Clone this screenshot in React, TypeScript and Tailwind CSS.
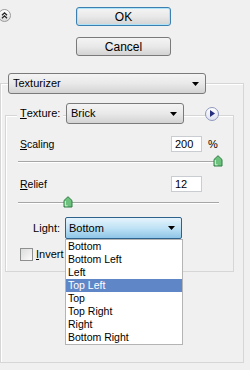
import React from "react";

function Arrow({ className = "" }: { className?: string }) {
  return (
    <svg width="7" height="4" viewBox="0 0 7 4" className={className}>
      <path d="M0 0H7L3.5 4Z" fill="#000" />
    </svg>
  );
}

function Thumb() {
  return (
    <svg width="10" height="12" viewBox="0 0 10 12">
      <path d="M1 4.5L5 0.7L9 4.5V11H1Z" fill="#6cc27d" stroke="#2f7d43" strokeWidth="1" />
      <path d="M2.3 5V9.8H4.5" fill="none" stroke="#d8f3dc" strokeWidth="1" />
    </svg>
  );
}

export default function App() {
  const items = [
    "Bottom",
    "Bottom Left",
    "Left",
    "Top Left",
    "Top",
    "Top Right",
    "Right",
    "Bottom Right",
  ];
  return (
    <div className="relative w-[250px] h-[370px] overflow-hidden bg-[#f0f0f0] text-[11px] leading-none text-black font-['Liberation_Sans',Arial,sans-serif]">
      <div className="flex flex-col">
        {/* top buttons */}
        <div className="flex items-start pt-[7px]">
          <div className="-ml-[2px] mt-[2px] flex h-[13px] w-[13px] items-center justify-center rounded-full border border-[#9a9a9a] bg-linear-to-b from-[#ffffff] to-[#d9d9d9]">
            <svg width="7" height="7" viewBox="0 0 7 7">
              <path d="M1 3.3L3.5 0.9L6 3.3M1 6.3L3.5 3.9L6 6.3" fill="none" stroke="#222" strokeWidth="1.3" />
            </svg>
          </div>
          <div className="ml-[65px] flex flex-col gap-[11px]">
            <div className="flex h-[19px] w-[95px] items-center justify-center rounded-[3px] border border-[#3c7fb1] bg-linear-to-b from-[#f4f4f4] via-[#e9e9e9] to-[#d3d3d3] shadow-[inset_0_0_0_1px_#aee3f8] text-[12px]">
              OK
            </div>
            <div className="flex h-[19px] w-[95px] items-center justify-center rounded-[3px] border border-[#7a7a7a] bg-linear-to-b from-[#f4f4f4] via-[#e9e9e9] to-[#d3d3d3] text-[12px]">
              Cancel
            </div>
          </div>
        </div>

        {/* Texturizer select */}
        <div className="relative z-10 ml-[8px] mt-[17px] flex h-[21px] w-[198px] items-center justify-between rounded-[3px] border border-[#7a7a7a] bg-linear-to-b from-[#f4f4f4] via-[#e9e9e9] to-[#d3d3d3] pl-[4px] pr-[6px]">
          <span>Texturizer</span>
          <Arrow />
        </div>

        {/* outer box */}
        <div className="-mt-[11px] flex h-[280px] w-[244px] flex-col border border-[#d6d6d6] pt-[19px] shadow-[inset_1px_1px_0_#ffffff]">
          {/* Texture legend row */}
          <div className="relative z-10 ml-[16px] flex h-[21px] items-center">
            <span className="flex h-full w-[46px] items-center bg-[#f0f0f0] pl-[3px]">
              <span className="underline underline-offset-1">T</span>exture:
            </span>
            <div className="ml-[3px] flex h-[21px] w-[118px] items-center justify-between rounded-[3px] border border-[#7a7a7a] bg-linear-to-b from-[#f4f4f4] via-[#e9e9e9] to-[#d3d3d3] pl-[4px] pr-[6px]">
              <span>Brick</span>
              <Arrow />
            </div>
            <div className="ml-[21px] flex h-[14px] w-[14px] items-center justify-center rounded-full border border-[#8f98bd] bg-linear-to-b from-[#ffffff] to-[#dfe3f0]">
              <svg width="5" height="7" viewBox="0 0 5 7" className="ml-[1px]">
                <path d="M0 0L5 3.5L0 7Z" fill="#27307e" />
              </svg>
            </div>
          </div>

          {/* inner box */}
          <div className="-mt-[9px] ml-[4px] flex h-[157px] w-[229px] flex-col border border-[#d6d6d6] shadow-[inset_1px_1px_0_#ffffff]">
            {/* Scaling */}
            <div className="mt-[20px] flex h-[16px] items-center pl-[14px]">
              <span className="w-[151px] text-[10.5px]">
                <span className="underline underline-offset-1">S</span>caling
              </span>
              <div className="flex h-[16px] w-[31px] items-center border border-[#c9cdd2] bg-white pl-[3px]">200</div>
              <span className="ml-[6px]">%</span>
            </div>
            <div className="relative ml-[12px] mt-[3px] h-[12px] w-[201px]">
              <div className="absolute left-0 right-0 top-[6px] h-[1px] bg-[#a6a6a6]" />
              <div className="absolute left-0 right-0 top-[7px] h-[1px] bg-white" />
              <div className="absolute left-[195px] top-0">
                <Thumb />
              </div>
            </div>

            {/* Relief */}
            <div className="mt-[9px] flex h-[16px] items-center pl-[14px]">
              <span className="w-[151px] text-[10.5px]">
                <span className="underline underline-offset-1">R</span>elief
              </span>
              <div className="flex h-[16px] w-[31px] items-center border border-[#c9cdd2] bg-white pl-[3px]">12</div>
            </div>
            <div className="relative ml-[12px] mt-[4px] h-[12px] w-[201px]">
              <div className="absolute left-0 right-0 top-[6px] h-[1px] bg-[#a6a6a6]" />
              <div className="absolute left-0 right-0 top-[7px] h-[1px] bg-white" />
              <div className="absolute left-[45px] top-0">
                <Thumb />
              </div>
            </div>

            {/* Light */}
            <div className="mt-[9px] flex h-[22px] items-center">
              <span className="w-[54px] text-right">Light:</span>
              <div className="ml-[5px] flex h-[22px] w-[117px] items-center justify-between rounded-[2px] border border-[#2c628b] bg-linear-to-b from-[#e6f4fc] via-[#bfe2f5] to-[#8fc6e8] pl-[3px] pr-[6px]">
                <span>Bottom</span>
                <Arrow />
              </div>
            </div>

            {/* Invert */}
            <div className="mt-[9px] flex h-[13px] items-center pl-[14px]">
              <div className="h-[13px] w-[13px] border border-[#8e8f8f] bg-linear-to-br from-[#dcdcdc] to-[#fbfbfb]" />
              <span className="ml-[3px]">
                <span className="underline underline-offset-1">I</span>nvert
              </span>
            </div>
          </div>
        </div>
      </div>

      {/* open dropdown list */}
      <div className="absolute left-[65px] top-[239px] flex w-[118px] flex-col border border-[#b4b4b4] bg-white text-[10.5px]">
        {items.map((it) => (
          <div
            key={it}
            className={
              it === "Top Left"
                ? "flex h-[13px] items-center bg-[#5f87c7] pl-[2px] text-white"
                : "flex h-[13px] items-center pl-[2px]"
            }
          >
            {it}
          </div>
        ))}
      </div>
    </div>
  );
}
